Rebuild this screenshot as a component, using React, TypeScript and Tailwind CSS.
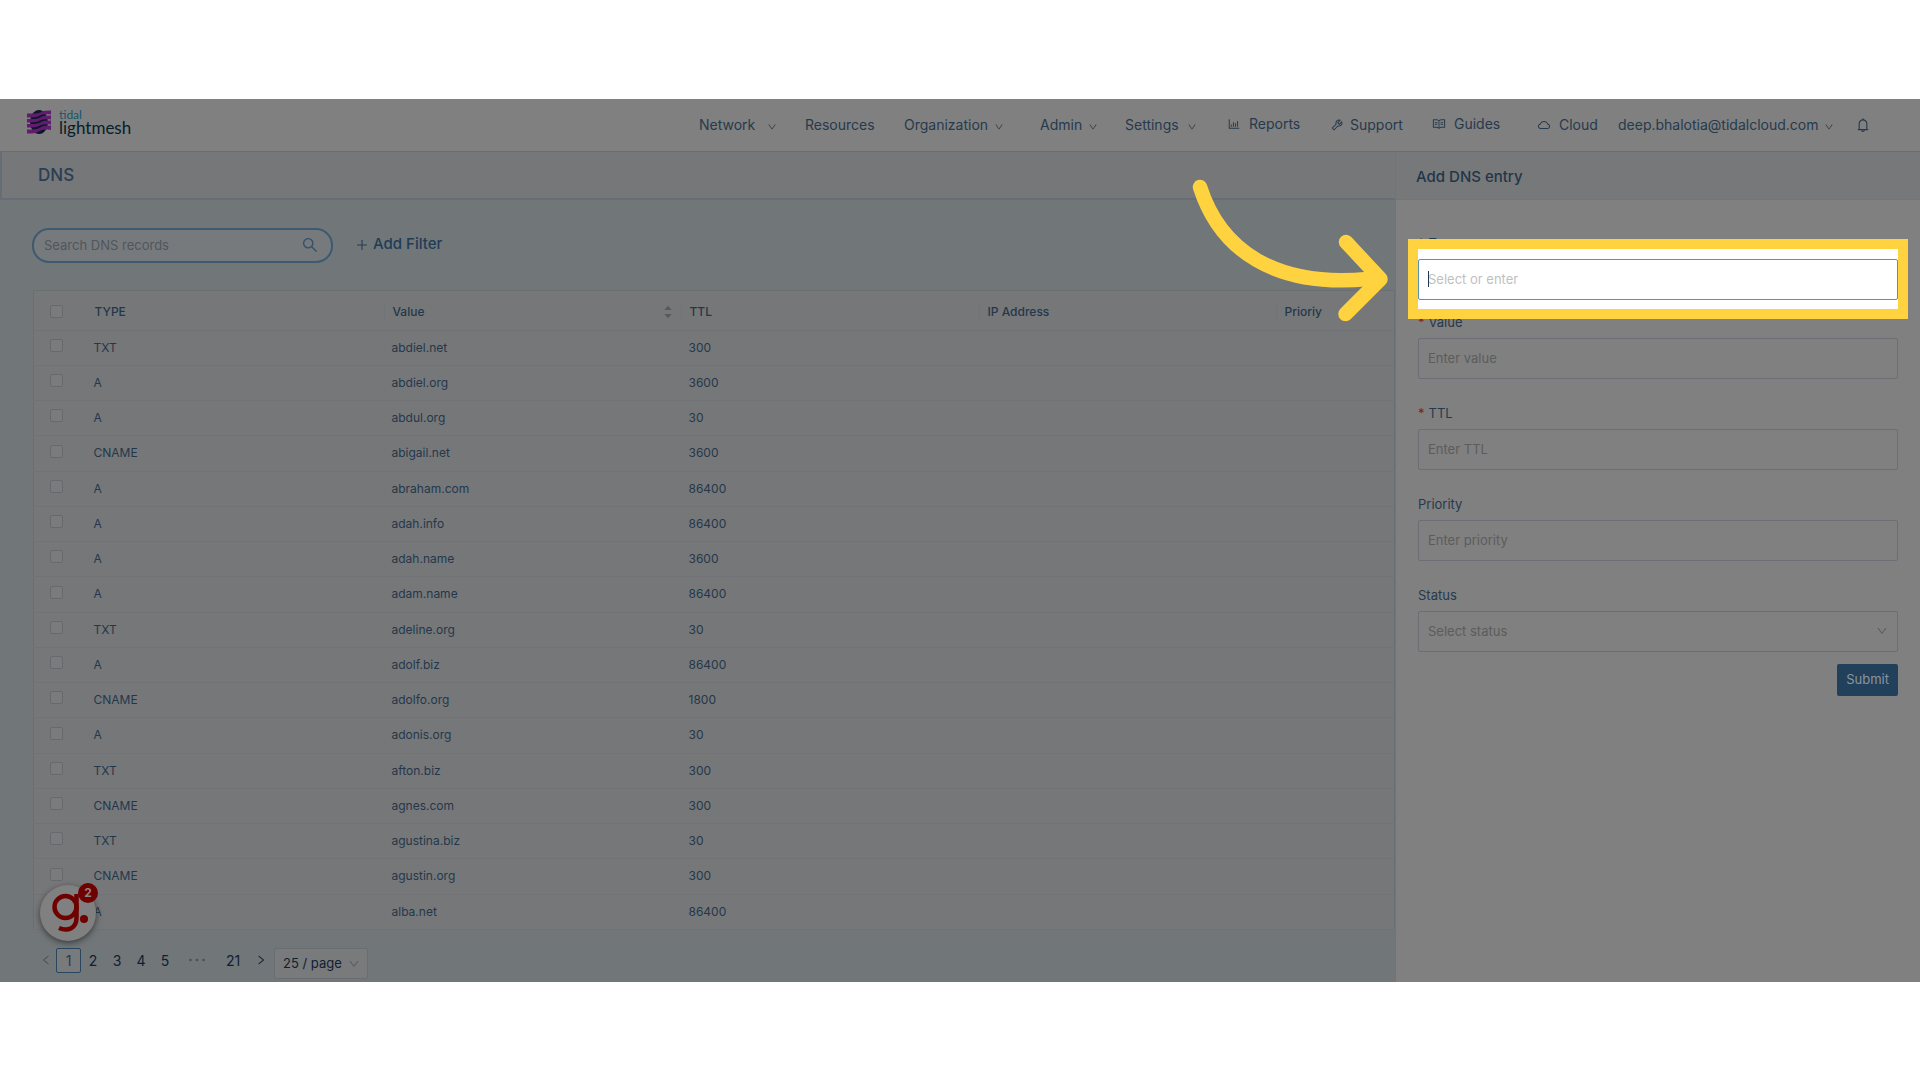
import React from "react";
import {
  AiFillCaretDown,
  AiFillCaretUp,
  AiOutlineBarChart,
  AiOutlineBell,
  AiOutlineCloud,
  AiOutlineDown,
  AiOutlineEllipsis,
  AiOutlineLeft,
  AiOutlinePlus,
  AiOutlineRead,
  AiOutlineRight,
  AiOutlineSearch,
  AiOutlineTool,
} from "react-icons/ai";

const records: [string, string, string][] = [
  ["TXT", "abdiel.net", "300"],
  ["A", "abdiel.org", "3600"],
  ["A", "abdul.org", "30"],
  ["CNAME", "abigail.net", "3600"],
  ["A", "abraham.com", "86400"],
  ["A", "adah.info", "86400"],
  ["A", "adah.name", "3600"],
  ["A", "adam.name", "86400"],
  ["TXT", "adeline.org", "30"],
  ["A", "adolf.biz", "86400"],
  ["CNAME", "adolfo.org", "1800"],
  ["A", "adonis.org", "30"],
  ["TXT", "afton.biz", "300"],
  ["CNAME", "agnes.com", "300"],
  ["TXT", "agustina.biz", "30"],
  ["CNAME", "agustin.org", "300"],
  ["A", "alba.net", "86400"],
];

function Logo() {
  return (
    <a href="#home" className="flex items-start gap-2">
      <svg viewBox="0 0 24 24" className="-mt-px h-6 w-6" aria-hidden="true">
        <ellipse cx="12" cy="12" rx="9" ry="12" fill="#0b1827" />
        <g fill="#611b6f">
          <path d="M0 3.500H5C9 3.500 12 3.500 15 1.500Q17 0.500 24 0.500V4.500C16 4 14 5 11 6.500Q8 7.500 0 7.500Z" />
          <path d="M0 9H5C9 9 12 8.500 15 6.500Q17 5.500 24 5.500V9.500C16 9 14 10 11 11.500Q8 12.500 0 12.500Z" />
          <path d="M0 14H5C9 14 12 13.500 15 11.500Q17 10.500 24 10.500V14.500C16 14 14 15 11 16.500Q8 17.500 0 17.500Z" />
          <path d="M0 19.500H5C9 19.500 12 18.500 15 16.500Q17 15.500 24 15.500V20C16 19 14 20 11 22Q8 23.500 0 23.500Z" />
        </g>
      </svg>
      <span className="-mt-0.5 flex flex-col font-[Lato,sans-serif]">
        <span className="text-[12px] leading-3 text-[#15566a]">tidal</span>
        <span className="text-[17px] leading-[14px] text-[#06202a]">lightmesh</span>
      </span>
    </a>
  );
}

function NavMenu({ label, slot, gap = "gap-2" }: { label: string; slot: string; gap?: string }) {
  return (
    <button type="button" className={`flex shrink-0 items-center whitespace-nowrap ${slot} ${gap}`}>
      {label}
      <AiOutlineDown className="mt-1 size-2.5" />
    </button>
  );
}

function NavLink({
  label,
  slot,
  icon,
  gap = "gap-2.5",
}: {
  label: string;
  slot: string;
  icon?: React.ReactNode;
  gap?: string;
}) {
  return (
    <a href={`#${label.toLowerCase()}`} className={`flex shrink-0 items-center ${slot} ${gap}`}>
      {icon}
      {label}
    </a>
  );
}

function Header() {
  return (
    <header className="flex h-[53px] items-start justify-between border-b border-[#696c73] bg-[#808080] pt-3 pl-[27px]">
      <Logo />
      <nav className="flex h-7 items-center text-[14px] text-[#263a4d]">
        <NavMenu label="Network" slot="w-[106px]" gap="gap-3" />
        <NavLink label="Resources" slot="w-[99px]" />
        <NavMenu label="Organization" slot="w-[136px]" gap="gap-1.5" />
        <NavMenu label="Admin" slot="w-[85px]" gap="gap-1.5" />
        <NavMenu label="Settings" slot="w-[102px]" />
        <NavLink label="Reports" slot="w-[103px] pb-0.5" gap="gap-2" icon={<AiOutlineBarChart className="size-3.5" />} />
        <NavLink label="Support" slot="w-[102px]" gap="gap-1.5" icon={<AiOutlineTool className="size-3.5" />} />
        <NavLink label="Guides" slot="w-[105px] pb-0.5" gap="gap-2" icon={<AiOutlineRead className="size-3.5" />} />
        <NavLink label="Cloud" slot="w-[81px]" gap="gap-2" icon={<AiOutlineCloud className="size-3.5" />} />
        <NavMenu label="deep.bhalotia@tidalcloud.com" slot="w-[237px]" gap="gap-1.5" />
        <button type="button" aria-label="Notifications" className="w-[65px]">
          <AiOutlineBell className="size-4" />
        </button>
      </nav>
    </header>
  );
}

function Checkbox({ label }: { label: string }) {
  return (
    <input
      type="checkbox"
      aria-label={label}
      className="block size-[13px] appearance-none rounded-xs border border-[#68696e] bg-[#7a7b7c]"
    />
  );
}

function HeadCell({ children, sortable }: { children: string; sortable?: boolean }) {
  return (
    <th className="p-0 pt-1 text-left font-medium">
      <span className="flex h-3.5 items-center justify-between border-l border-[#727376] pr-2 pl-2">
        {children}
        {sortable && (
          <button type="button" aria-label="Sort by value" className="flex flex-col text-[#56585a]">
            <AiFillCaretUp className="-mb-0.5 size-2.5" />
            <AiFillCaretDown className="size-2.5" />
          </button>
        )}
      </span>
    </th>
  );
}

function RecordsTable() {
  return (
    <table className="w-full table-fixed border-collapse border border-[#6c6f72] bg-[#767779] text-[12px] text-[#24374a]">
      <colgroup>
        <col className="w-[52px]" />
        <col className="w-[298px]" />
        <col className="w-[297px]" />
        <col className="w-[298px]" />
        <col className="w-[297px]" />
        <col />
      </colgroup>
      <thead>
        <tr className="h-10 border-b border-[#6f7174]">
          <th className="p-0 pt-0.5 pl-4">
            <Checkbox label="Select all records" />
          </th>
          <th className="p-0 pt-1 pl-[9px] text-left font-medium">TYPE</th>
          <HeadCell sortable>Value</HeadCell>
          <HeadCell>TTL</HeadCell>
          <HeadCell>IP Address</HeadCell>
          <HeadCell>Prioriy</HeadCell>
        </tr>
      </thead>
      <tbody>
        {records.map(([type, value, ttl]) => (
          <tr key={value} className="h-[35px] border-b border-[#717275] nth-[4n]:h-9">
            <td className="p-0 pb-1 pl-4">
              <Checkbox label={`Select ${value}`} />
            </td>
            <td className="p-0 pl-2">{type}</td>
            <td className="p-0 pl-2">{value}</td>
            <td className="p-0 pl-2">{ttl}</td>
            <td />
            <td />
          </tr>
        ))}
      </tbody>
    </table>
  );
}

function Pagination() {
  return (
    <div className="flex items-start pt-[18px] pl-2 text-[14px] text-[#0f2033]">
      <button type="button" aria-label="Previous page" className="flex h-[25px] w-4 items-center text-[#4b5155]">
        <AiOutlineLeft className="size-3" />
      </button>
      <button type="button" className="h-[25px] w-[25px] rounded-xs border border-[#28465f] bg-[#787a7b] text-[#1c3d5a]">
        1
      </button>
      {["2", "3", "4", "5"].map((page) => (
        <button key={page} type="button" className="h-[25px] w-6">
          {page}
        </button>
      ))}
      <button type="button" aria-label="Next pages" className="flex h-[25px] w-10 items-center justify-center text-[#4b5155]">
        <AiOutlineEllipsis className="size-6" />
      </button>
      <button type="button" className="h-[25px] w-8">
        21
      </button>
      <button type="button" aria-label="Next page" className="flex h-[25px] w-[23px] items-center justify-center">
        <AiOutlineRight className="size-3" />
      </button>
      <label className="relative ml-0.5 block">
        <select
          aria-label="Page size"
          defaultValue="25"
          className="block h-[31px] w-[94px] appearance-none rounded-xs border border-[#686d72] bg-[#787a7b] pt-px pl-2 text-[13px]"
        >
          <option value="25">25 / page</option>
          <option value="50">50 / page</option>
        </select>
        <AiOutlineDown className="pointer-events-none absolute top-2.5 right-2 size-3 text-[#565b5f]" />
      </label>
    </div>
  );
}

function Field({
  id,
  label,
  required,
  children,
}: {
  id: string;
  label: string;
  required?: boolean;
  children: React.ReactNode;
}) {
  return (
    <div className="flex flex-col">
      <label htmlFor={id} className="flex h-[33px] items-center gap-1 pt-1 text-[13px] text-[#263a4d]">
        {required && <span className="text-[#7f1d1f]">*</span>}
        {label}
      </label>
      {children}
    </div>
  );
}

const inputClass =
  "block h-[41px] w-full appearance-none rounded-xs border border-[#6b6e75] bg-[#808080] px-[9px] text-[13px] text-[#5c5c5c] placeholder:text-[#5c5c5c]";

function Drawer() {
  return (
    <aside className="relative z-10 flex w-[525px] shrink-0 flex-col border-l border-[#717376] bg-[#808080]">
      <h2 className="flex h-12 items-center border-b border-[#737476] bg-[#777879] px-5 pt-1 text-[15px] font-medium text-[#22364a]">
        Add DNS entry
      </h2>
      <form className="flex flex-col gap-[17px] px-[22px] pt-[26px]" onSubmit={(e) => e.preventDefault()}>
        <div className="-mb-3">
          <Field id="type" label="Type" required>
            <div className="relative">
              <div className="absolute -inset-x-2.5 -top-5 -bottom-[19px] border-10 border-[#ffd23f] bg-white" />
              <svg
                viewBox="0 0 196 144"
                className="pointer-events-none absolute right-full -top-[83px] mr-[29px] h-[144px] w-[196px] overflow-visible"
                fill="none"
                stroke="#ffd23f"
                strokeWidth="14.500"
                strokeLinecap="round"
                strokeLinejoin="round"
                aria-hidden="true"
              >
                <path d="M7 11C27 74 82 112 175 103" />
                <path d="M153 66L187.500 103L152.500 138" />
              </svg>
              <input
                id="type"
                placeholder="Select or enter"
                className="relative block h-[41px] w-full rounded-xs border border-[#5b93b5] bg-white px-[9px] text-[13px] text-[#24394d] placeholder:text-[#bfbfbf]"
              />
              <span className="absolute top-3 left-2.5 h-4 w-px bg-[#24394d]" />
            </div>
          </Field>
        </div>
        <Field id="value" label="Value" required>
          <input id="value" placeholder="Enter value" className={inputClass} />
        </Field>
        <Field id="ttl" label="TTL" required>
          <input id="ttl" placeholder="Enter TTL" className={inputClass} />
        </Field>
        <Field id="priority" label="Priority">
          <input id="priority" placeholder="Enter priority" className={inputClass} />
        </Field>
        <Field id="status" label="Status">
          <div className="relative">
            <select id="status" defaultValue="" className={`${inputClass} pt-0.5`}>
              <option value="">Select status</option>
              <option value="active">Active</option>
            </select>
            <AiOutlineDown className="pointer-events-none absolute top-3.5 right-2.5 size-3 text-[#5a5a5a]" />
          </div>
        </Field>
        <button
          type="submit"
          className="-mt-[5px] h-8 self-end rounded-xs bg-[#21405c] px-[9px] pt-px text-[13px] text-[#8c959c]"
        >
          Submit
        </button>
      </form>
    </aside>
  );
}

function GuideButton() {
  return (
    <button
      type="button"
      aria-label="Open guides, 2 new"
      className="absolute bottom-[41px] left-10 size-14 rounded-full bg-[#808080] shadow-[0_2px_6px_rgba(0,0,0,0.5)]"
    >
      <svg viewBox="0 0 56 56" className="size-14" aria-hidden="true">
        <g fill="none" stroke="#6e0000" strokeWidth="4.500">
          <circle cx="25.500" cy="22" r="11" />
          <path d="M36.500 9V33C36.500 43 28 47 19 43" />
        </g>
        <circle cx="44" cy="34" r="4" fill="#6e0000" />
      </svg>
      <span className="absolute -top-0.5 -right-0.5 flex size-5 items-center justify-center rounded-full bg-[#6e0000] text-[12px] font-bold text-[#8f8080]">
        2
      </span>
    </button>
  );
}

export default function App() {
  return (
    <div className="flex min-h-screen flex-col justify-center bg-white font-[Inter,sans-serif]">
      <div className="relative flex flex-col">
        <Header />
        <div className="flex">
          <main className="min-w-0 flex-1 overflow-hidden bg-[#717679]">
            <h1 className="flex h-12 items-center border-b-2 border-l-2 border-[#676d77] bg-[#767779] pt-0.5 pl-9 text-[17px] font-medium text-[#2a3e54]">
              DNS
            </h1>
            <div className="flex flex-col pt-7 pb-[3px] pl-8">
              <div className="flex items-start gap-[22px]">
                <label className="relative block">
                  <input
                    type="search"
                    aria-label="Search DNS records"
                    placeholder="Search DNS records"
                    className="block h-[35px] w-[301px] rounded-[17px] border-2 border-[#3d5a72] bg-[#777a7c] px-2.5 text-[13px] placeholder:text-[#4f565c]"
                  />
                  <AiOutlineSearch className="absolute top-2 right-3.5 size-[18px] text-[#34506a]" />
                </label>
                <button type="button" className="flex h-[34px] items-center gap-1 text-[15px] font-medium text-[#203c57]">
                  <AiOutlinePlus className="size-3.5" />
                  Add Filter
                </button>
              </div>
              <div className="pt-[27px] pl-px">
                <RecordsTable />
              </div>
              <Pagination />
            </div>
          </main>
          <Drawer />
        </div>
        <GuideButton />
      </div>
    </div>
  );
}
